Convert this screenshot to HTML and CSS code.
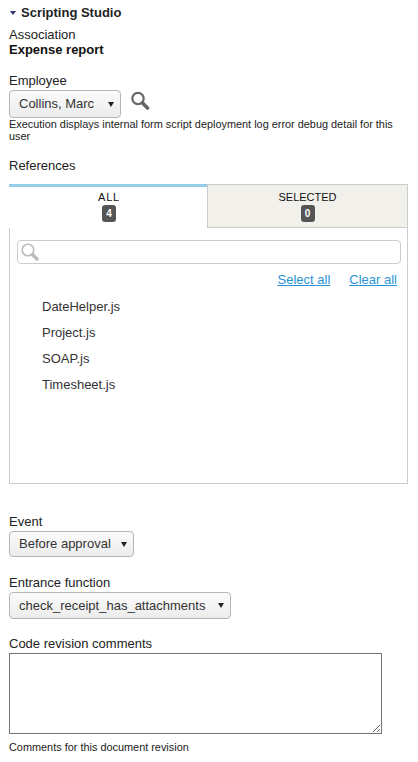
FILE: index.html
```html
<!DOCTYPE html>
<html lang="en">
<head>
<meta charset="utf-8">
<title>Scripting Studio</title>
<link rel="stylesheet" href="styles.css">
</head>
<body>
<h1 class="title"><span class="caret"></span>Scripting Studio</h1>
<div class="field assoc">
  <div class="label">Association</div>
  <div class="value">Expense report</div>
</div>
<div class="field employee">
  <div class="label">Employee</div>
  <div class="row">
    <div class="select sel-employee"><span>Collins, Marc</span><i class="arrow"></i></div>
    <svg class="lookup" width="20" height="20" viewBox="0 0 20 20"><circle cx="8" cy="7.5" r="5.7" fill="#fff" stroke="#666" stroke-width="2.2"/><path d="M12.5 12l5 5" stroke="#666" stroke-width="3.6" stroke-linecap="round"/></svg>
  </div>
  <div class="hint">Execution displays internal form script deployment log error debug detail for this user</div>
</div>
<div class="field refs">
  <div class="label">References</div>
  <div class="panel">
    <div class="tabs">
      <div class="tab active"><div class="tab-name">ALL</div><div class="badge">4</div></div>
      <div class="tab"><div class="tab-name">SELECTED</div><div class="badge">0</div></div>
    </div>
    <div class="search">
      <svg width="20" height="20" viewBox="0 0 20 20"><circle cx="8" cy="8" r="5.8" fill="none" stroke="#bbb" stroke-width="1.6"/><path d="M12.5 12.5l4.5 4.5" stroke="#bbb" stroke-width="3.4" stroke-linecap="round"/></svg>
    </div>
    <div class="links"><a href="#">Select all</a><a href="#">Clear all</a></div>
    <ul class="list">
      <li>DateHelper.js</li>
      <li>Project.js</li>
      <li>SOAP.js</li>
      <li>Timesheet.js</li>
    </ul>
  </div>
</div>
<div class="field event">
  <div class="label">Event</div>
  <div class="select sel-event"><span>Before approval</span><i class="arrow"></i></div>
</div>
<div class="field entrance">
  <div class="label">Entrance function</div>
  <div class="select sel-entrance"><span>check_receipt_has_attachments</span><i class="arrow"></i></div>
</div>
<div class="field code">
  <div class="label">Code revision comments</div>
  <textarea class="comments"></textarea>
  <div class="hint hint-code">Comments for this document revision</div>
</div>
</body>
</html>
```
FILE: styles.css
```css
* { box-sizing: border-box; }
html, body { margin: 0; padding: 0; }
body {
  width: 418px;
  height: 762px;
  overflow: hidden;
  padding: 4px 9px 0;
  background: #fff;
  color: #222;
  font-family: "Liberation Sans", Arial, sans-serif;
  font-size: 13px;
  line-height: 16px;
}
.title {
  display: flex;
  align-items: center;
  margin: 0;
  font-size: 13px;
  line-height: 17px;
  font-weight: 700;
  color: #222;
}
.caret {
  width: 0;
  height: 0;
  margin: 1px 5px 0 1px;
  border-left: 3px solid transparent;
  border-right: 3px solid transparent;
  border-top: 4px solid #33337a;
}
.assoc { margin-top: 5px; }
.value { font-weight: 700; color: #111; }
.employee { margin-top: 14px; }
.label { height: 16px; line-height: 18px; }
.row { display: flex; align-items: flex-start; margin-top: 2px; }
.select {
  display: flex;
  align-items: center;
  justify-content: space-between;
  border: 1px solid #b5b5b5;
  border-radius: 4px;
  background: linear-gradient(#fbfbfb, #ececec);
  padding: 0 6px 0 9px;
  color: #333;
}
.sel-employee { width: 112px; height: 28px; }
.sel-event { width: 125px; height: 26px; margin-top: 2px; }
.sel-entrance { width: 222px; height: 27px; margin-top: 2px; }
.arrow {
  width: 0;
  height: 0;
  border-left: 3.5px solid transparent;
  border-right: 3.5px solid transparent;
  border-top: 5px solid #222;
}
.lookup { margin: 1px 0 0 9px; }
.hint {
  margin-top: 0;
  font-size: 10.9px;
  line-height: 12px;
  color: #222;
}
.refs { margin-top: 15px; }
.panel {
  width: 399px;
  height: 300px;
  margin-top: 11px;
  border: 1px solid #ccc;
  border-top: 0;
}
.tabs { display: flex; height: 44px; }
.tab {
  flex: 1;
  padding-top: 6px;
  text-align: center;
  background: #f1f0eb;
  border-top: 1px solid #ccc;
  border-bottom: 1px solid #ccc;
  border-left: 1px solid #ccc;
  font-size: 11px;
  line-height: 13px;
  color: #111;
}
.tab.active {
  flex: 0 0 198px;
  margin-left: -1px;
  background: #fff;
  border: 0;
  border-top: 3px solid #96cde6;
  padding: 4px 0 0 2px;
  letter-spacing: .8px;
}
.badge {
  width: 14px;
  height: 17px;
  margin: 1px auto 0;
  border-radius: 3px;
  background: #555;
  color: #fff;
  font-size: 10px;
  font-weight: 700;
  line-height: 17px;
  letter-spacing: 0;
  text-align: center;
}
.search {
  display: flex;
  align-items: center;
  width: 384px;
  height: 24px;
  margin: 12px 0 0 7px;
  padding-left: 2px;
  border: 1px solid #ccc;
  border-radius: 4px;
}
.links {
  display: flex;
  justify-content: flex-end;
  gap: 19px;
  margin-top: 8px;
  padding-right: 10px;
}
.links a { color: #2a93d5; text-decoration: underline; }
.list { margin: 11px 0 0; padding: 0 0 0 32px; list-style: none; }
.list li { height: 26px; line-height: 16px; color: #333; }
.event { margin-top: 29px; }
.entrance { margin-top: 17px; }
.code { margin-top: 16px; }
.comments {
  display: block;
  width: 373px;
  height: 81px;
  margin: 2px 0 0;
  padding: 0;
  border: 1px solid #767676;
  border-radius: 0;
  background: #fff;
}
.hint-code { margin-top: 7px; }
```
